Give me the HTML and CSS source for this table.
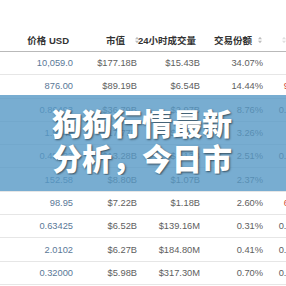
FILE: index.html
```html
<!DOCTYPE html>
<html lang="zh-CN">
<head>
<meta charset="utf-8">
<title>狗狗行情最新分析</title>
<link rel="stylesheet" href="styles.css">
</head>
<body>
<div class="page">
  <div class="table">
    <div class="row head">
      <div class="cell c1">价格 USD</div>
      <div class="cell">市值<svg class="sort wide" viewBox="0 0 4 8"><path d="M0 3.2L2 0.8L4 3.2Z M0 4.8L2 7.2L4 4.8Z"/></svg></div>
      <div class="cell">24小时成交量<svg class="sort" viewBox="0 0 4 8"><path d="M0 3.2L2 0.8L4 3.2Z M0 4.8L2 7.2L4 4.8Z"/></svg></div>
      <div class="cell c4">交易份额<svg class="sort" viewBox="0 0 4 8"><path d="M0 3.2L2 0.8L4 3.2Z M0 4.8L2 7.2L4 4.8Z"/></svg></div>
      <div class="cell c5"><svg class="sort faint" viewBox="0 0 4 8"><path d="M0 3.2L2 0.8L4 3.2Z M0 4.8L2 7.2L4 4.8Z"/></svg></div>
    </div>
    <div class="row"><div class="cell price">10,059.0</div><div class="cell">$177.18B</div><div class="cell">$15.43B</div><div class="cell">34.07%</div><div class="cell c5"></div></div>
    <div class="row"><div class="cell price">876.00</div><div class="cell">$89.19B</div><div class="cell">$6.54B</div><div class="cell">14.44%</div><div class="cell c5 down">9.8%</div></div>
    <div class="row"><div class="cell price">0.86493</div><div class="cell">$36.79B</div><div class="cell">$2.97B</div><div class="cell">8.76%</div><div class="cell c5">0.12%</div></div>
    <div class="row"><div class="cell price">1.5449</div><div class="cell">$17.77B</div><div class="cell">$1.70B</div><div class="cell">3.26%</div><div class="cell c5"></div></div>
    <div class="row"><div class="cell price">0.48433</div><div class="cell">$13.28B</div><div class="cell">$1.13B</div><div class="cell">2.51%</div><div class="cell c5">0.35%</div></div>
    <div class="row"><div class="cell price">152.58</div><div class="cell">$8.80B</div><div class="cell">$1.07B</div><div class="cell">2.37%</div><div class="cell c5"></div></div>
    <div class="row"><div class="cell price">98.95</div><div class="cell">$7.22B</div><div class="cell">$1.18B</div><div class="cell">2.60%</div><div class="cell c5 down">6.4%</div></div>
    <div class="row"><div class="cell price">0.63425</div><div class="cell">$6.52B</div><div class="cell">$139.16M</div><div class="cell">0.31%</div><div class="cell c5">0.27%</div></div>
    <div class="row"><div class="cell price">2.0102</div><div class="cell">$6.27B</div><div class="cell">$184.80M</div><div class="cell">0.41%</div><div class="cell c5">0.19%</div></div>
    <div class="row"><div class="cell price">0.32000</div><div class="cell">$5.98B</div><div class="cell">$317.30M</div><div class="cell">0.70%</div><div class="cell c5">0.53%</div></div>
  </div>
  <div class="banner">
    <h1 class="title">狗狗行情最新分析，今日市场走势解读</h1>
  </div>
</div>
</body>
</html>
```
FILE: styles.css
```css
html, body {
  margin: 0;
  padding: 0;
  background: #ffffff;
}
.page {
  position: relative;
  width: 286px;
  height: 286px;
  overflow: hidden;
  font-family: "Liberation Sans", Arial, "Noto Sans CJK SC", sans-serif;
}
.table {
  padding-top: 29px;
  width: 330px;
}
.row {
  display: grid;
  grid-template-columns: 75px 64px 63px 63px 65px;
  height: 23.3px;
  box-sizing: border-box;
  border-bottom: 1px solid #e6e6e6;
  align-items: center;
  font-size: 9.3px;
  color: #5e5e5e;
}
.row.head {
  height: 23px;
  border-bottom: 1px solid #b9b9b9;
  font-size: 9.5px;
  font-weight: bold;
  color: #333333;
  font-family: "Liberation Sans", Arial, "Noto Sans CJK SC", sans-serif;
}
.cell {
  text-align: right;
  padding-right: 2px;
  white-space: nowrap;
  display: flex;
  justify-content: flex-end;
  align-items: center;
}
.head .cell {
  padding-right: 0;
}
.head .c1 {
  padding-right: 6px;
}
.head .c4 {
  padding-right: 3px;
}
.cell.c5 {
  justify-content: flex-end;
  padding-right: 25px;
}
.head .cell.c5 {
  justify-content: flex-start;
  padding-left: 17px;
}
.price {
  color: #5a7897;
}
.down {
  color: #d04a3a;
}
.sort {
  width: 4px;
  height: 8px;
  margin-left: 6px;
  fill: #bdbdbd;
}
.sort.wide {
  margin-left: 10px;
}
.sort.faint {
  fill: #e0e0e0;
  margin-left: 0;
}
.banner {
  position: absolute;
  left: 0;
  top: 95px;
  width: 286px;
  height: 96px;
  background: rgba(86, 152, 197, 0.8);
  display: flex;
  justify-content: center;
  align-items: flex-start;
}
.title {
  margin: 10px 0 0 0;
  width: 182px;
  height: 70px;
  overflow: hidden;
  font-family: "Noto Sans CJK SC", sans-serif;
  font-weight: 900;
  font-size: 30px;
  line-height: 35px;
  color: #ffffff;
  text-align: left;
  text-shadow: 1px 1px 2px rgba(0, 0, 0, 0.55);
  word-break: break-all;
}
```
